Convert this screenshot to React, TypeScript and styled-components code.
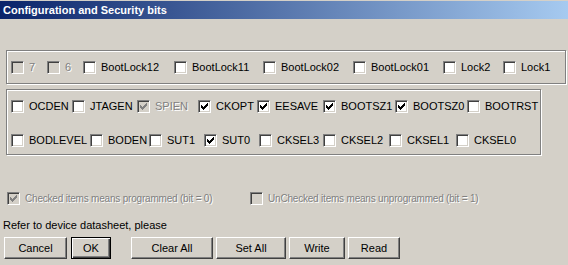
import React, { FC } from "react";
import styled, { createGlobalStyle } from "styled-components";

const GlobalStyle = createGlobalStyle`
  html, body {
    margin: 0;
    padding: 0;
    background: #d4d0c8;
  }
  body {
    font-family: "Liberation Sans", Arial, sans-serif;
    font-size: 11px;
    color: #000;
  }
`;

const Window = styled.div`
  width: 568px;
  height: 265px;
  overflow: hidden;
  background: #d4d0c8;
  display: flex;
  flex-direction: column;
`;

const TitleBar = styled.div`
  margin-top: 1px;
  height: 18px;
  display: flex;
  align-items: center;
  padding-left: 3px;
  background: linear-gradient(to right, #0a246a, #a6caf0);
  color: #fff;
  font-weight: bold;
  font-size: 11px;
`;

const Body = styled.div`
  display: flex;
  flex-direction: column;
  padding: 31px 0 0 6px;
`;

const Group = styled.div<{ width: number; height: number; rowGap?: number }>`
  box-sizing: border-box;
  width: ${({ width }) => width}px;
  height: ${({ height }) => height}px;
  border: 1px solid #808080;
  box-shadow: inset 1px 1px 0 #fff, 1px 1px 0 #fff;
  padding: 10px 0 0 4px;
  display: flex;
  flex-direction: column;
  gap: ${({ rowGap }) => rowGap ?? 0}px;
`;

const Spacer = styled.div`
  height: 5px;
`;

const Row = styled.div`
  display: flex;
  align-items: center;
  height: 13px;
`;

const Item = styled.label<{ width?: number }>`
  display: flex;
  align-items: center;
  gap: 5px;
  flex: none;
  width: ${({ width }) => (width ? `${width}px` : "auto")};
  white-space: nowrap;
`;

const Box = styled.span<{ disabled?: boolean }>`
  box-sizing: border-box;
  display: block;
  flex: none;
  width: 13px;
  height: 13px;
  border: 1px solid;
  border-color: #808080 #fff #fff #808080;
  box-shadow: inset 1px 1px 0 #404040, inset -1px -1px 0 #d4d0c8;
  background: ${({ disabled }) => (disabled ? "#d4d0c8" : "#fff")};
  svg {
    display: block;
  }
`;

const Text = styled.span<{ disabled?: boolean; small?: boolean }>`
  line-height: 13px;
  font-size: ${({ small }) => (small ? "10px" : "11px")};
  letter-spacing: ${({ small }) => (small ? "-0.2px" : "normal")};
  color: ${({ disabled }) => (disabled ? "#808080" : "#000")};
  text-shadow: ${({ disabled }) => (disabled ? "1px 1px 0 #fff" : "none")};
`;

const Legend = styled.div`
  display: flex;
  align-items: center;
  height: 13px;
  margin: 37px 0 0 1px;
`;

const Note = styled.div`
  margin: 14px 0 0 -3px;
  line-height: 13px;
`;

const Buttons = styled.div`
  display: flex;
  margin: 5px 0 0 -2px;
`;

const Button = styled.button<{ width: number; gapLeft?: number; isDefault?: boolean }>`
  box-sizing: border-box;
  width: ${({ width }) => width}px;
  height: 22px;
  margin-left: ${({ gapLeft }) => gapLeft ?? 0}px;
  padding: 0;
  font-family: "Liberation Sans", Arial, sans-serif;
  font-size: 11px;
  color: #000;
  background: #d4d0c8;
  border: 1px solid;
  border-color: ${({ isDefault }) =>
    isDefault ? "#000" : "#fff #404040 #404040 #fff"};
  box-shadow: ${({ isDefault }) =>
    isDefault
      ? "inset 1px 1px 0 #fff, inset -1px -1px 0 #404040, inset -2px -2px 0 #808080"
      : "inset -1px -1px 0 #808080"};
`;

const Check: FC<{ disabled?: boolean }> = ({ disabled }) => (
  <svg width="11" height="11" viewBox="1 1 11 11" shapeRendering="crispEdges">
    <path
      fill={disabled ? "#808080" : "#000"}
      d="M3 5h1v3h-1z M4 6h1v3h-1z M5 7h1v3h-1z M6 6h1v3h-1z M7 5h1v3h-1z M8 4h1v3h-1z M9 3h1v3h-1z"
    />
  </svg>
);

interface IBit {
  name: string;
  width?: number;
  checked?: boolean;
  disabled?: boolean;
  small?: boolean;
}

const CheckItem: FC<IBit> = ({ name, width, checked, disabled, small }) => (
  <Item width={width}>
    <Box disabled={disabled}>{checked && <Check disabled={disabled} />}</Box>
    <Text disabled={disabled} small={small}>
      {name}
    </Text>
  </Item>
);

const lockBits: IBit[] = [
  { name: "7", width: 36, disabled: true },
  { name: "6", width: 36, disabled: true },
  { name: "BootLock12", width: 91 },
  { name: "BootLock11", width: 89 },
  { name: "BootLock02", width: 90 },
  { name: "BootLock01", width: 90 },
  { name: "Lock2", width: 60 },
  { name: "Lock1" },
];

const highFuses: IBit[] = [
  { name: "OCDEN", width: 61 },
  { name: "JTAGEN", width: 65 },
  { name: "SPIEN", width: 61, checked: true, disabled: true },
  { name: "CKOPT", width: 59, checked: true },
  { name: "EESAVE", width: 66, checked: true },
  { name: "BOOTSZ1", width: 72, checked: true },
  { name: "BOOTSZ0", width: 72, checked: true },
  { name: "BOOTRST" },
];

const lowFuses: IBit[] = [
  { name: "BODLEVEL", width: 79 },
  { name: "BODEN", width: 59 },
  { name: "SUT1", width: 55 },
  { name: "SUT0", width: 55, checked: true },
  { name: "CKSEL3", width: 64 },
  { name: "CKSEL2", width: 66 },
  { name: "CKSEL1", width: 67 },
  { name: "CKSEL0" },
];

const App: FC = () => (
  <Window>
    <GlobalStyle />
    <TitleBar>Configuration and Security bits</TitleBar>
    <Body>
      <Group width={560} height={34}>
        <Row>
          {lockBits.map((b) => (
            <CheckItem key={b.name} {...b} />
          ))}
        </Row>
      </Group>
      <Spacer />
      <Group width={535} height={66} rowGap={21}>
        <Row>
          {highFuses.map((b) => (
            <CheckItem key={b.name} {...b} />
          ))}
        </Row>
        <Row>
          {lowFuses.map((b) => (
            <CheckItem key={b.name} {...b} />
          ))}
        </Row>
      </Group>
      <Legend>
        <CheckItem
          name="Checked items means programmed (bit = 0)"
          width={243}
          checked
          disabled
          small
        />
        <CheckItem
          name="UnChecked items means unprogrammed (bit = 1)"
          disabled
          small
        />
      </Legend>
      <Note>Refer to device datasheet, please</Note>
      <Buttons>
        <Button width={63}>Cancel</Button>
        <Button width={40} gapLeft={4} isDefault>
          OK
        </Button>
        <Button width={82} gapLeft={20}>
          Clear All
        </Button>
        <Button width={70} gapLeft={3}>
          Set All
        </Button>
        <Button width={56} gapLeft={3}>
          Write
        </Button>
        <Button width={52} gapLeft={3}>
          Read
        </Button>
      </Buttons>
    </Body>
  </Window>
);

export default App;
